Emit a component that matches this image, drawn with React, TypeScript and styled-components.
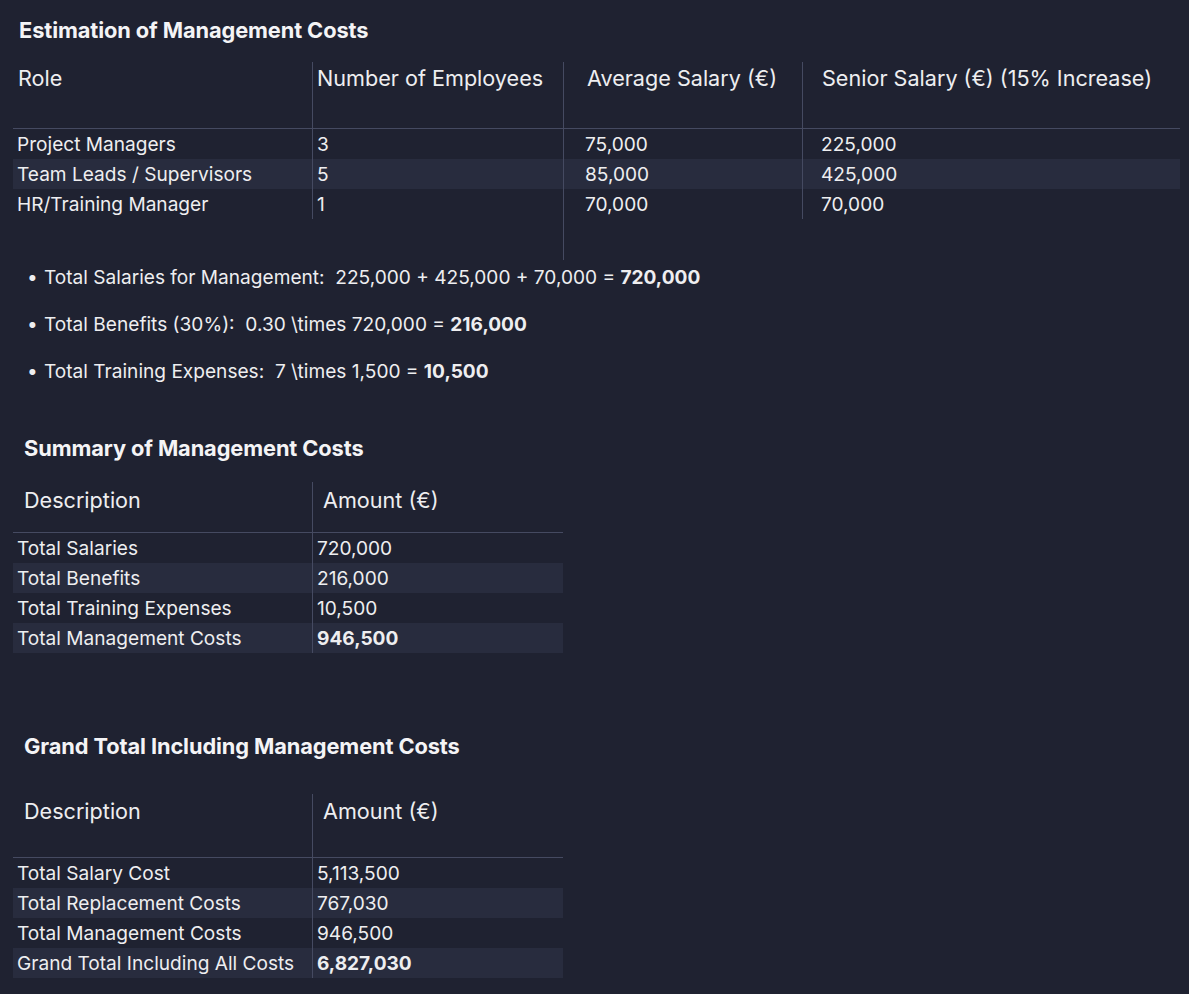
import React from 'react';
import styled, { createGlobalStyle } from 'styled-components';

const GlobalStyle = createGlobalStyle`
  html, body {
    margin: 0;
    padding: 0;
    background: #1f2231;
  }
  body {
    font-family: Inter, "Noto Sans", "Liberation Sans", sans-serif;
    color: #eeeef0;
  }
`;

const Page = styled.div`
  padding: 18px 9px 16px 13px;
  min-height: 994px;
  box-sizing: border-box;
`;

const Heading = styled.h2<{ $indent: number; $top: number; $bottom: number }>`
  margin: ${(p) => p.$top}px 0 ${(p) => p.$bottom}px ${(p) => p.$indent}px;
  font-size: 21.8px;
  line-height: 24px;
  font-weight: 700;
  letter-spacing: -0.1px;
  color: #f4f4f6;
`;

const Table = styled.div<{ $cols: string }>`
  display: grid;
  grid-template-columns: ${(p) => p.$cols};
`;

const HeadCell = styled.div<{ $pad: number; $top: number; $height: number; $divider: boolean }>`
  height: ${(p) => p.$height}px;
  box-sizing: border-box;
  padding: ${(p) => p.$top}px 0 0 ${(p) => p.$pad}px;
  font-size: 21.6px;
  line-height: 24px;
  border-bottom: 1px solid #454a61;
  border-left: ${(p) => (p.$divider ? '1px solid #454a61' : 'none')};
  white-space: nowrap;
`;

const Cell = styled.div<{ $pad: number; $divider: boolean; $stripe: boolean; $bold?: boolean }>`
  height: 30px;
  box-sizing: border-box;
  padding-left: ${(p) => p.$pad}px;
  font-size: 19.1px;
  line-height: 30px;
  font-weight: ${(p) => (p.$bold ? 700 : 400)};
  background: ${(p) => (p.$stripe ? '#282c3e' : 'transparent')};
  border-left: ${(p) => (p.$divider ? '1px solid #454a61' : 'none')};
  white-space: nowrap;
`;

const Trailing = styled.div<{ $offset: number; $height: number }>`
  margin-left: ${(p) => p.$offset}px;
  height: ${(p) => p.$height}px;
  border-left: 1px solid #454a61;
`;

const Bullets = styled.ul`
  list-style: none;
  margin: 5px 0 0;
  padding: 0 0 0 14px;
  display: flex;
  flex-direction: column;
  gap: 23px;
`;

const Bullet = styled.li`
  font-size: 19.1px;
  line-height: 24px;
  display: flex;
  gap: 7px;
  white-space: pre;

  &::before {
    content: '•';
    width: 10px;
  }

  b {
    font-weight: 700;
  }
`;

type Col = { head: string; headPad: number; pad: number };
type Row = { cells: string[]; bold?: number[] };

const DataTable = ({
  cols,
  widths,
  headTop,
  headHeight,
  rows,
}: {
  cols: Col[];
  widths: string;
  headTop: number;
  headHeight: number;
  rows: Row[];
}) => (
  <Table $cols={widths}>
    {cols.map((c, i) => (
      <HeadCell key={c.head} $pad={c.headPad} $top={headTop} $height={headHeight} $divider={i > 0}>
        {c.head}
      </HeadCell>
    ))}
    {rows.map((r, ri) =>
      r.cells.map((v, ci) => (
        <Cell
          key={`${ri}-${ci}`}
          $pad={cols[ci].pad}
          $divider={ci > 0}
          $stripe={ri % 2 === 1}
          $bold={r.bold?.includes(ci)}
        >
          {v}
        </Cell>
      ))
    )}
  </Table>
);

const roleCols: Col[] = [
  { head: 'Role', headPad: 5, pad: 4 },
  { head: 'Number of Employees', headPad: 4, pad: 4 },
  { head: 'Average Salary (€)', headPad: 23, pad: 21 },
  { head: 'Senior Salary (€) (15% Increase)', headPad: 19, pad: 18 },
];

const roleRows: Row[] = [
  { cells: ['Project Managers', '3', '75,000', '225,000'] },
  { cells: ['Team Leads / Supervisors', '5', '85,000', '425,000'] },
  { cells: ['HR/Training Manager', '1', '70,000', '70,000'] },
];

const costCols: Col[] = [
  { head: 'Description', headPad: 11, pad: 4 },
  { head: 'Amount (€)', headPad: 10, pad: 4 },
];

const summaryRows: Row[] = [
  { cells: ['Total Salaries', '720,000'] },
  { cells: ['Total Benefits', '216,000'] },
  { cells: ['Total Training Expenses', '10,500'] },
  { cells: ['Total Management Costs', '946,500'], bold: [1] },
];

const grandRows: Row[] = [
  { cells: ['Total Salary Cost', '5,113,500'] },
  { cells: ['Total Replacement Costs', '767,030'] },
  { cells: ['Total Management Costs', '946,500'] },
  { cells: ['Grand Total Including All Costs', '6,827,030'], bold: [1] },
];

export default function App() {
  return (
    <>
      <GlobalStyle />
      <Page>
        <Heading $indent={6} $top={0} $bottom={20}>
          Estimation of Management Costs
        </Heading>
        <DataTable
          cols={roleCols}
          widths="299px 251px 239px 378px"
          headTop={4}
          headHeight={67}
          rows={roleRows}
        />
        <Trailing $offset={550} $height={41} />
        <Bullets>
          <Bullet>
            <span>
              Total Salaries for Management:  225,000 + 425,000 + 70,000 = <b>720,000</b>
            </span>
          </Bullet>
          <Bullet>
            <span>
              Total Benefits (30%):  0.30 \times 720,000 = <b>216,000</b>
            </span>
          </Bullet>
          <Bullet>
            <span>
              Total Training Expenses:  7 \times 1,500 = <b>10,500</b>
            </span>
          </Bullet>
        </Bullets>
        <Heading $indent={11} $top={53} $bottom={22}>
          Summary of Management Costs
        </Heading>
        <DataTable cols={costCols} widths="299px 251px" headTop={6} headHeight={51} rows={summaryRows} />
        <Heading $indent={11} $top={81} $bottom={36}>
          Grand Total Including Management Costs
        </Heading>
        <DataTable cols={costCols} widths="299px 251px" headTop={5} headHeight={64} rows={grandRows} />
      </Page>
    </>
  );
}
